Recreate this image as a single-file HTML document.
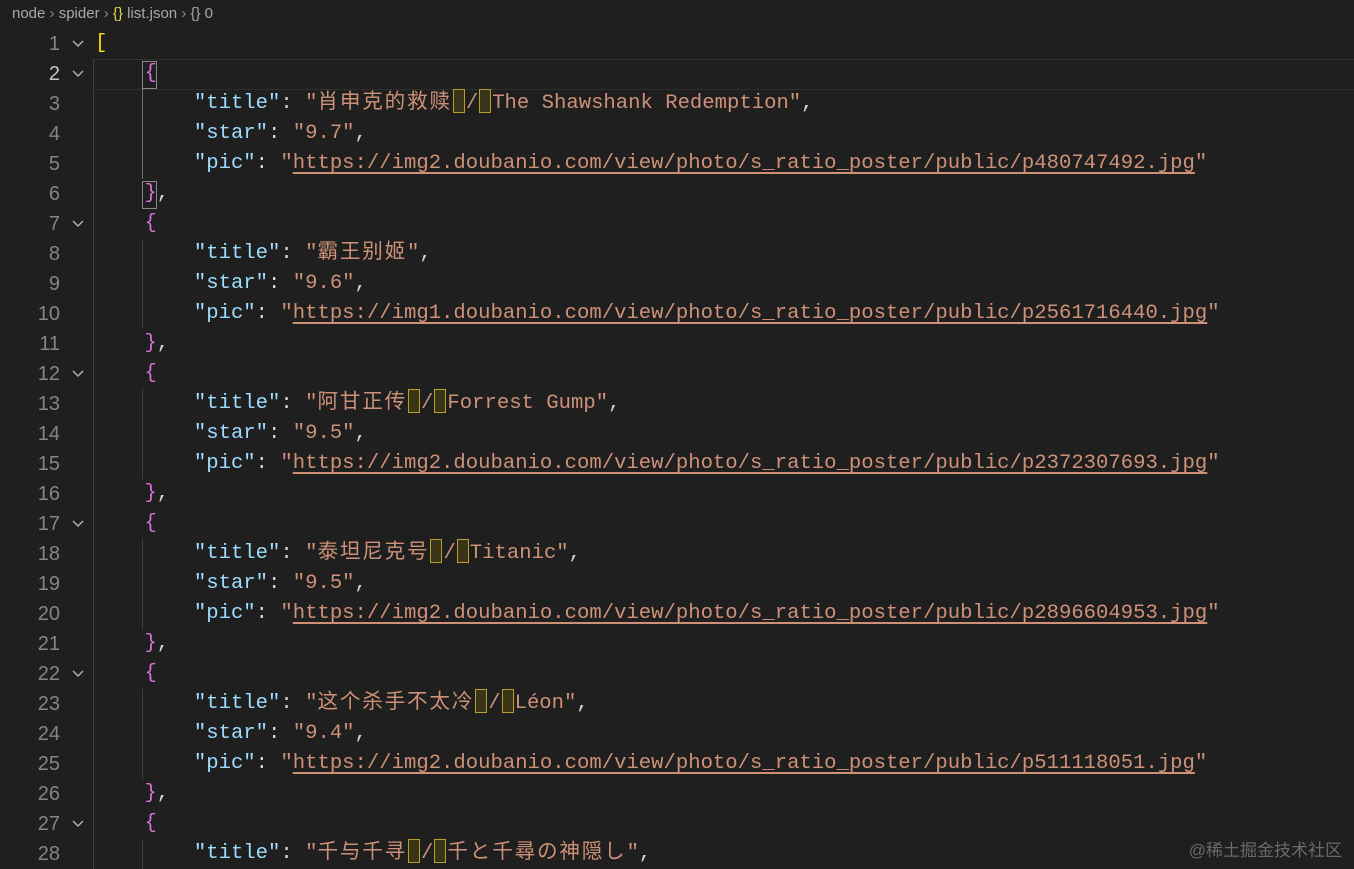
<!DOCTYPE html>
<html><head><meta charset="utf-8"><style>
html,body{margin:0;padding:0;background:#1f1f1f;width:1354px;height:869px;overflow:hidden}
body{position:relative;font-family:"Liberation Mono",monospace;font-size:20.6px;color:#d4d4d4}
.bc{position:absolute;left:12px;top:5px;font-family:"Liberation Sans",sans-serif;font-size:15px;color:#a9a9a9;white-space:pre}
.ln{position:absolute;left:0;width:60px;text-align:right;color:#858585;font-size:20px;line-height:30px;font-family:"Liberation Sans",sans-serif}
.ln.a{color:#c6c6c6}
.l{position:absolute;left:95px;height:30px;line-height:30px;white-space:pre}
.k{color:#9cdcfe}.s{color:#ce9178}.u{color:#ce9178;text-decoration:underline;text-underline-offset:4px}
.y{color:#ffd700}.p{color:#da70d6}
.c{display:inline-block;line-height:20px;font-family:"Noto Sans CJK SC",sans-serif;letter-spacing:1.8px}
.b{display:inline-block;width:10px;height:22px;border:1px solid #b8a02a;background:#3a3418;vertical-align:-5px;margin:0 1px}
.g{position:absolute;width:1px;background:#404040}
.cur{position:absolute;left:93px;right:0;top:59px;height:29px;border:1px solid #2e2e2e;border-right:none}
.wm{position:absolute;right:12px;bottom:8px;font-family:"Liberation Sans","Noto Sans CJK SC",sans-serif;font-size:17px;color:#6a6a6a}
</style></head><body>
<div class="bc">node <span style="color:#888">›</span> spider <span style="color:#888">›</span> <span style="color:#e8d44d">{}</span> list.json <span style="color:#888">›</span> {} 0</div>
<div class="cur"></div>
<div class="g" style="left:93px;top:59px;height:810px"></div>
<div class="g" style="left:142px;top:89px;height:90px;background:#707070"></div>
<div class="g" style="left:142px;top:239px;height:90px"></div>
<div class="g" style="left:142px;top:389px;height:90px"></div>
<div class="g" style="left:142px;top:539px;height:90px"></div>
<div class="g" style="left:142px;top:689px;height:90px"></div>
<div class="g" style="left:142px;top:839px;height:30px"></div>
<div style="position:absolute;left:142px;top:61px;width:13px;height:26px;border:1px solid #888"></div>
<div style="position:absolute;left:142px;top:181px;width:13px;height:26px;border:1px solid #888"></div>

<div class="ln" style="top:29px">1</div>
<div class="ln a" style="top:59px">2</div>
<div class="ln" style="top:89px">3</div>
<div class="ln" style="top:119px">4</div>
<div class="ln" style="top:149px">5</div>
<div class="ln" style="top:179px">6</div>
<div class="ln" style="top:209px">7</div>
<div class="ln" style="top:239px">8</div>
<div class="ln" style="top:269px">9</div>
<div class="ln" style="top:299px">10</div>
<div class="ln" style="top:329px">11</div>
<div class="ln" style="top:359px">12</div>
<div class="ln" style="top:389px">13</div>
<div class="ln" style="top:419px">14</div>
<div class="ln" style="top:449px">15</div>
<div class="ln" style="top:479px">16</div>
<div class="ln" style="top:509px">17</div>
<div class="ln" style="top:539px">18</div>
<div class="ln" style="top:569px">19</div>
<div class="ln" style="top:599px">20</div>
<div class="ln" style="top:629px">21</div>
<div class="ln" style="top:659px">22</div>
<div class="ln" style="top:689px">23</div>
<div class="ln" style="top:719px">24</div>
<div class="ln" style="top:749px">25</div>
<div class="ln" style="top:779px">26</div>
<div class="ln" style="top:809px">27</div>
<div class="ln" style="top:839px">28</div>

<svg style="position:absolute;left:0;top:0" width="100" height="869">
<g fill="none" stroke="#b0b0b0" stroke-width="1.5">
<path d="M73 41l5 5 5-5"/><path d="M73 71l5 5 5-5"/><path d="M73 221l5 5 5-5"/><path d="M73 371l5 5 5-5"/><path d="M73 521l5 5 5-5"/><path d="M73 671l5 5 5-5"/><path d="M73 821l5 5 5-5"/>
</g></svg>

<div class="l" style="top:29px"><span class="y">[</span></div>
<div class="l" style="top:59px">    <span class="p">{</span></div>
<div class="l" style="top:89px">        <span class="k">"title"</span>: <span class="s">"<span class="c">肖申克的救赎</span><span class="b"></span>/<span class="b"></span>The Shawshank Redemption"</span>,</div>
<div class="l" style="top:119px">        <span class="k">"star"</span>: <span class="s">"9.7"</span>,</div>
<div class="l" style="top:149px">        <span class="k">"pic"</span>: <span class="s">"<span class="u">https://img2.doubanio.com/view/photo/s_ratio_poster/public/p480747492.jpg</span>"</span></div>
<div class="l" style="top:179px">    <span class="p">}</span>,</div>
<div class="l" style="top:209px">    <span class="p">{</span></div>
<div class="l" style="top:239px">        <span class="k">"title"</span>: <span class="s">"<span class="c">霸王别姬</span>"</span>,</div>
<div class="l" style="top:269px">        <span class="k">"star"</span>: <span class="s">"9.6"</span>,</div>
<div class="l" style="top:299px">        <span class="k">"pic"</span>: <span class="s">"<span class="u">https://img1.doubanio.com/view/photo/s_ratio_poster/public/p2561716440.jpg</span>"</span></div>
<div class="l" style="top:329px">    <span class="p">}</span>,</div>
<div class="l" style="top:359px">    <span class="p">{</span></div>
<div class="l" style="top:389px">        <span class="k">"title"</span>: <span class="s">"<span class="c">阿甘正传</span><span class="b"></span>/<span class="b"></span>Forrest Gump"</span>,</div>
<div class="l" style="top:419px">        <span class="k">"star"</span>: <span class="s">"9.5"</span>,</div>
<div class="l" style="top:449px">        <span class="k">"pic"</span>: <span class="s">"<span class="u">https://img2.doubanio.com/view/photo/s_ratio_poster/public/p2372307693.jpg</span>"</span></div>
<div class="l" style="top:479px">    <span class="p">}</span>,</div>
<div class="l" style="top:509px">    <span class="p">{</span></div>
<div class="l" style="top:539px">        <span class="k">"title"</span>: <span class="s">"<span class="c">泰坦尼克号</span><span class="b"></span>/<span class="b"></span>Titanic"</span>,</div>
<div class="l" style="top:569px">        <span class="k">"star"</span>: <span class="s">"9.5"</span>,</div>
<div class="l" style="top:599px">        <span class="k">"pic"</span>: <span class="s">"<span class="u">https://img2.doubanio.com/view/photo/s_ratio_poster/public/p2896604953.jpg</span>"</span></div>
<div class="l" style="top:629px">    <span class="p">}</span>,</div>
<div class="l" style="top:659px">    <span class="p">{</span></div>
<div class="l" style="top:689px">        <span class="k">"title"</span>: <span class="s">"<span class="c">这个杀手不太冷</span><span class="b"></span>/<span class="b"></span>Léon"</span>,</div>
<div class="l" style="top:719px">        <span class="k">"star"</span>: <span class="s">"9.4"</span>,</div>
<div class="l" style="top:749px">        <span class="k">"pic"</span>: <span class="s">"<span class="u">https://img2.doubanio.com/view/photo/s_ratio_poster/public/p511118051.jpg</span>"</span></div>
<div class="l" style="top:779px">    <span class="p">}</span>,</div>
<div class="l" style="top:809px">    <span class="p">{</span></div>
<div class="l" style="top:839px">        <span class="k">"title"</span>: <span class="s">"<span class="c">千与千寻</span><span class="b"></span>/<span class="b"></span><span class="c">千と千尋の神隠し</span>"</span>,</div>
<div class="wm">@稀土掘金技术社区</div>
</body></html>
